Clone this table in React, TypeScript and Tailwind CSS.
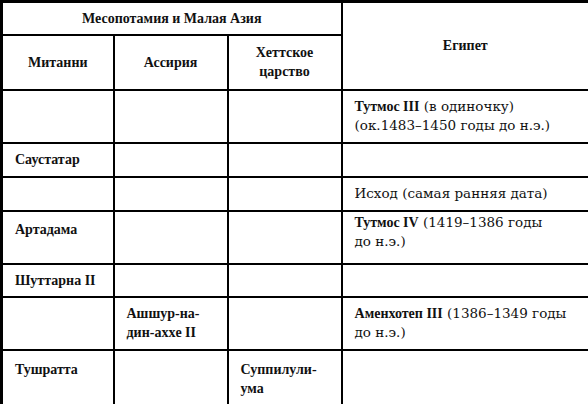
export default function App() {
  const cell =
    "border-2 border-black px-[12px] py-0 align-middle whitespace-nowrap font-[family-name:DejaVu_Serif,serif] text-[13.5px]";
  const bold = "font-[family-name:Liberation_Serif,serif] font-bold text-[14px]";
  return (
    <div className="w-[588px] h-[404px] overflow-hidden bg-white text-[#111] leading-[19px]">
      <table className="w-[588px] table-fixed border-collapse border-[3px] border-black">
        <colgroup>
          <col className="w-[112px]" />
          <col className="w-[114px]" />
          <col className="w-[114px]" />
          <col className="w-[248px]" />
        </colgroup>
        <tbody>
          <tr className="h-[33px]">
            <td colSpan={3} className={`${cell} ${bold} text-center`}>Месопотамия и Малая Азия</td>
            <td rowSpan={2} className={`${cell} ${bold} text-center`}>Египет</td>
          </tr>
          <tr className="h-[55px]">
            <td className={`${cell} ${bold} text-center`}>Митанни</td>
            <td className={`${cell} ${bold} text-center`}>Ассирия</td>
            <td className={`${cell} ${bold} text-center`}>
              Хеттское
              <br />
              царство
            </td>
          </tr>
          <tr className="h-[53px]">
            <td className={cell}></td>
            <td className={cell}></td>
            <td className={cell}></td>
            <td className={cell}>
              <b className={bold}>Тутмос III</b> (в одиночку)
              <br />
              (ок.1483–1450 годы до н.э.)
            </td>
          </tr>
          <tr className="h-[34px]">
            <td className={`${cell} ${bold}`}>Саустатар</td>
            <td className={cell}></td>
            <td className={cell}></td>
            <td className={cell}></td>
          </tr>
          <tr className="h-[34px]">
            <td className={cell}></td>
            <td className={cell}></td>
            <td className={cell}></td>
            <td className={cell}>Исход (самая ранняя дата)</td>
          </tr>
          <tr className="h-[53px]">
            <td className={`${cell} ${bold} !align-top pt-[8px]`}>Артадама</td>
            <td className={cell}></td>
            <td className={cell}></td>
            <td className={`${cell} !align-top pt-[1px]`}>
              <b className={bold}>Тутмос IV</b> (1419–1386 годы
              <br />
              до н.э.)
            </td>
          </tr>
          <tr className="h-[33px]">
            <td className={`${cell} ${bold}`}>Шуттарна II</td>
            <td className={cell}></td>
            <td className={cell}></td>
            <td className={cell}></td>
          </tr>
          <tr className="h-[53px]">
            <td className={cell}></td>
            <td className={`${cell} ${bold}`}>
              Ашшур-на-
              <br />
              дин-ахxe II
            </td>
            <td className={cell}></td>
            <td className={cell}>
              <b className={bold}>Аменхотеп III</b> (1386–1349 годы
              <br />
              до н.э.)
            </td>
          </tr>
          <tr className="h-[56px]">
            <td className={`${cell} ${bold} !align-top pt-[9px]`}>Тушратта</td>
            <td className={cell}></td>
            <td className={`${cell} ${bold} !align-top pt-[9px]`}>
              Суппилули-
              <br />
              ума
            </td>
            <td className={cell}></td>
          </tr>
        </tbody>
      </table>
    </div>
  );
}
